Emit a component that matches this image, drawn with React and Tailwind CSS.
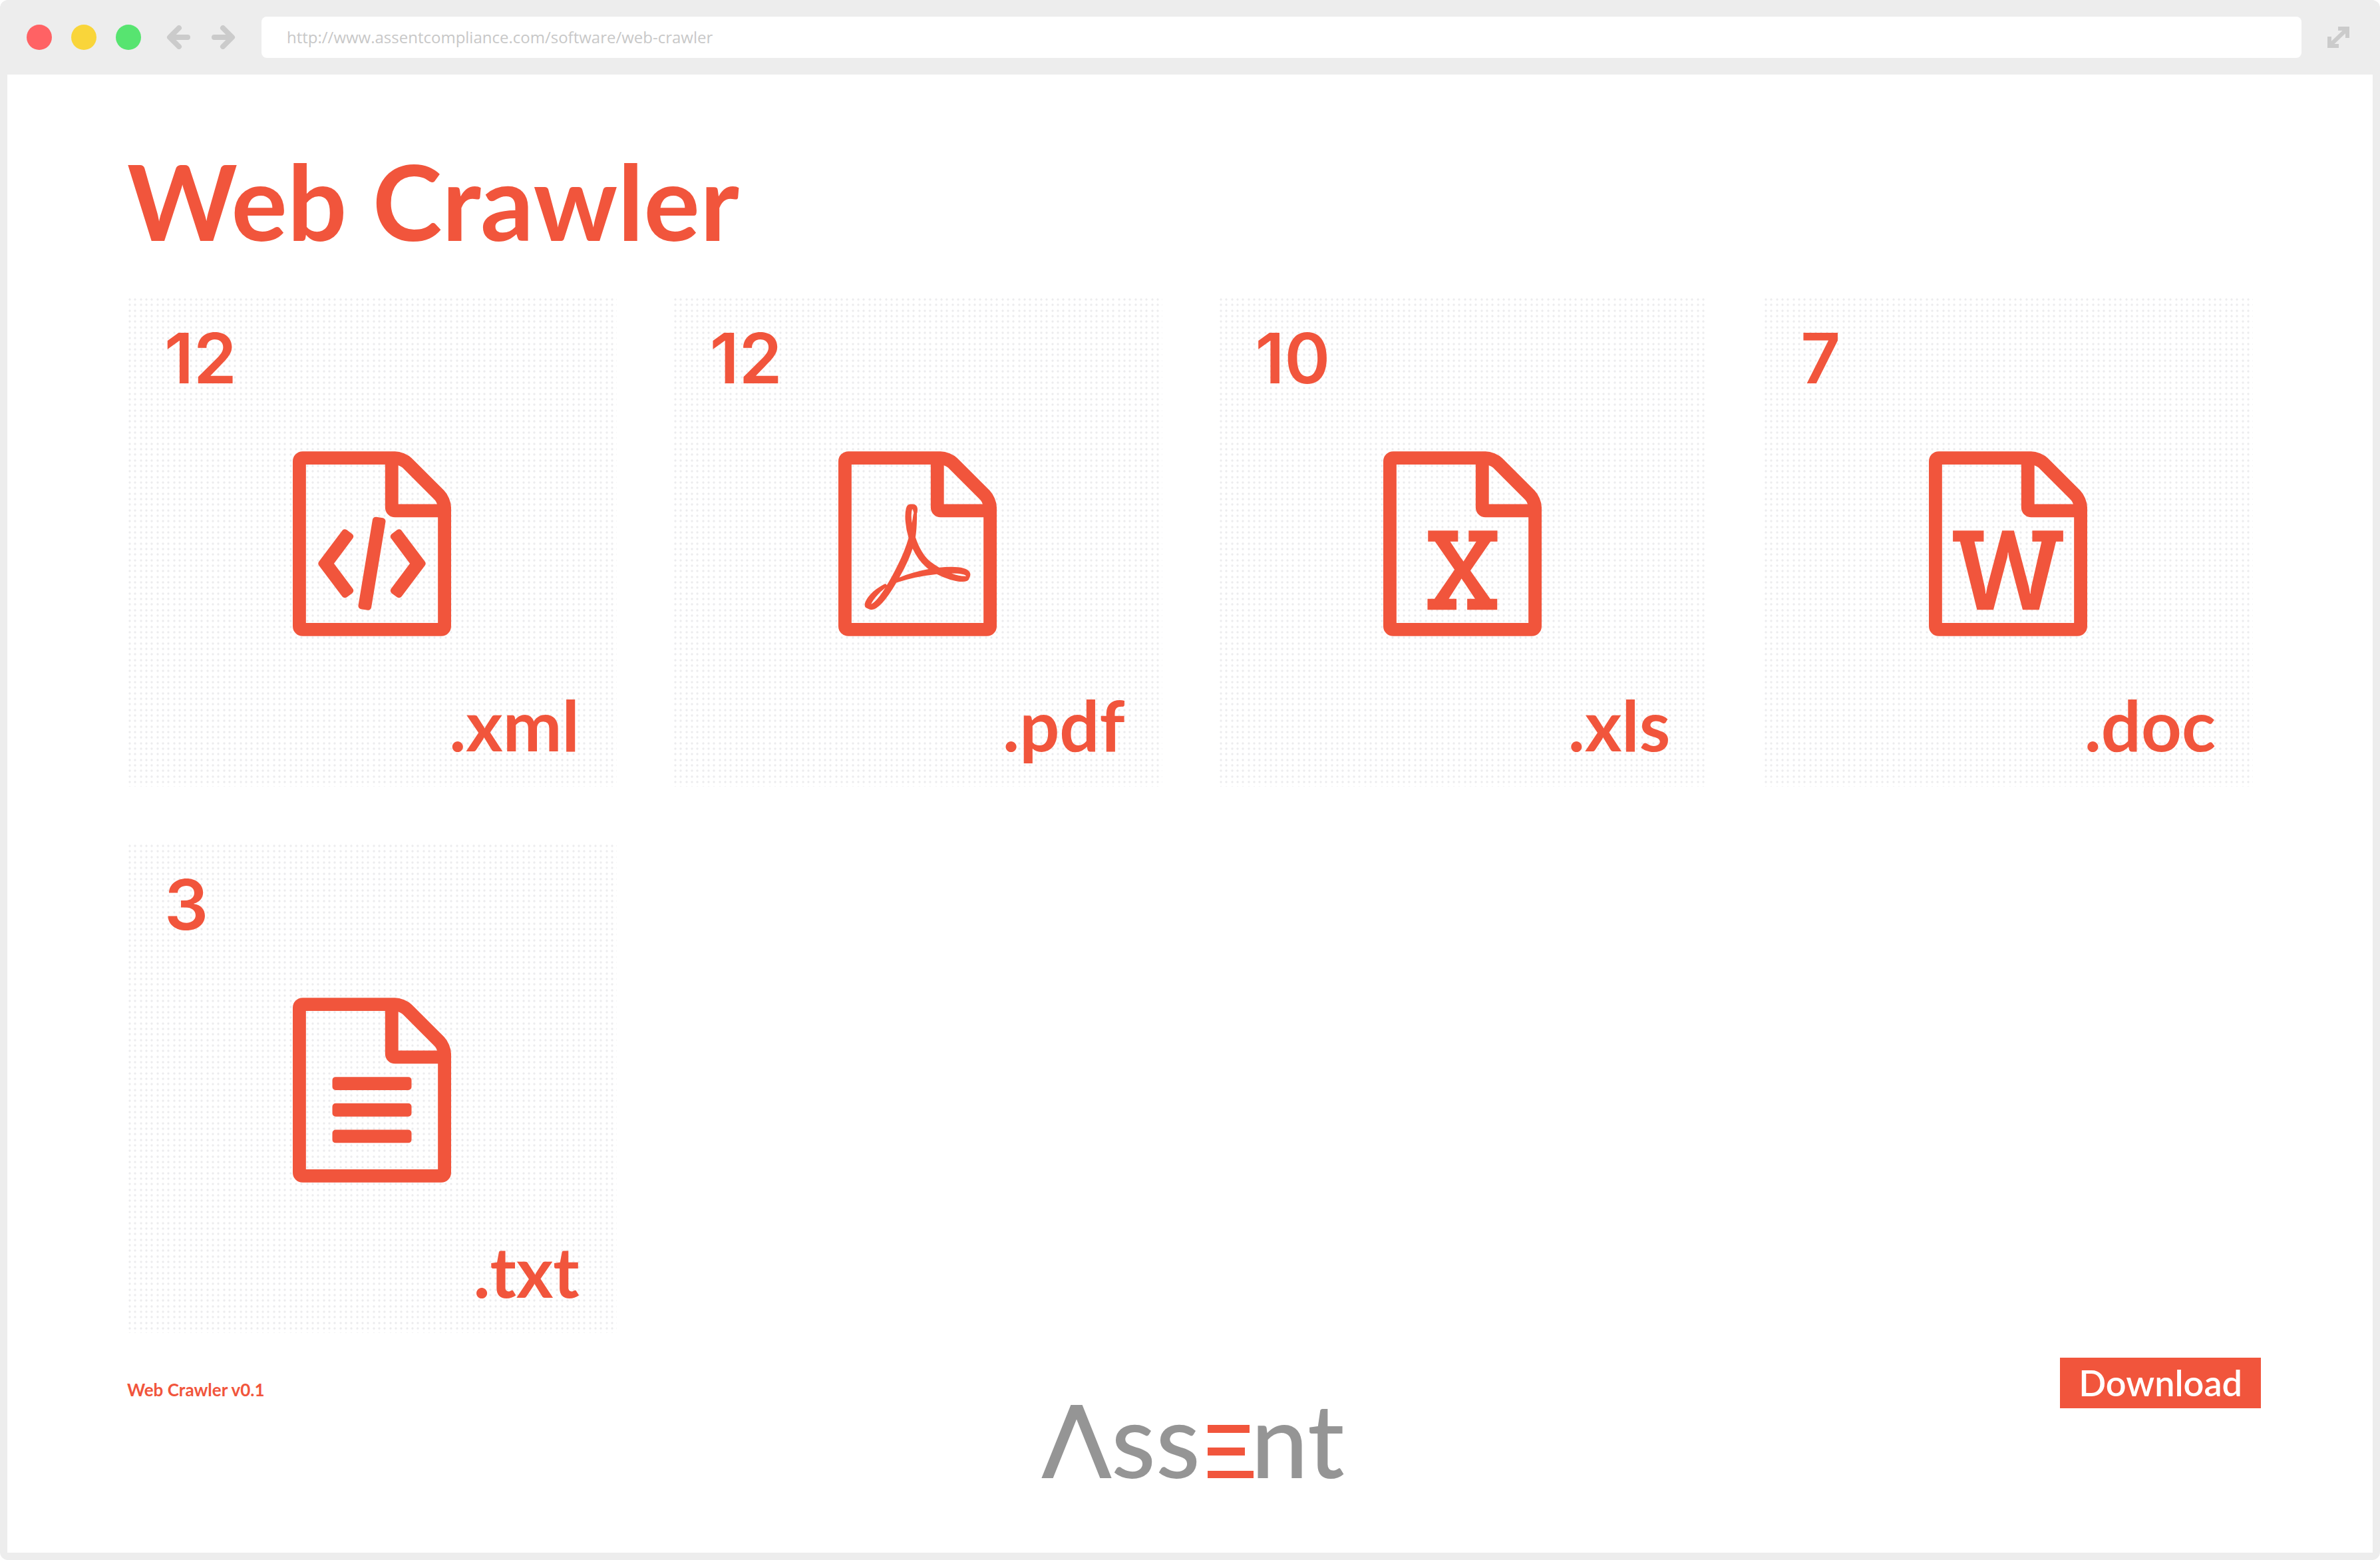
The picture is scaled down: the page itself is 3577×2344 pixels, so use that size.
import React from "react";

const DOC =
  "M1468 380q28 28 48 76t20 88v1152q0 40-28 68t-68 28H96q-40 0-68-28t-28-68V96q0-40 28-68T96 0h896q40 0 88 20t76 48zm-444-244v376h376q-10-29-22-41l-313-313q-12-12-41-22zm384 1528V640H992q-40 0-68-28t-28-68V128H128v1536h1280z";

const MARKS = {
  code: "M480 768q8-11 21-12.5t24 6.5l51 38q11 8 12.5 21t-6.5 24l-182 243 182 243q8 11 6.5 24t-12.5 21l-51 38q-11 8-24 6.5T480 1408L254 1107q-14-19 0-38zm802 301q14 19 0 38l-226 301q-8 11-21 12.5t-24-6.5l-51-38q-11-8-12.5-21t6.5-24l182-243-182-243q-8-11-6.5-24t12.5-21l51-38q11-8 24-6.5t21 12.5zm-620 461q-13-2-20.5-13t-5.5-24l138-831q2-13 13-20.5t24-5.5l63 10q13 2 20.5 13t5.5 24l-138 831q-2 13-13 20.5t-24 5.5z",
  pdf: "M894 1071q33 26 84 56 59-7 117-7 147 0 177 49 16 22 2 52 0 1-1 2l-2 2v1q-6 38-71 38-48 0-115-20t-130-53q-221 24-392 83-153 262-242 262-15 0-28-7l-24-12q-1-1-6-5-10-10-6-36 9-40 56-91.5t132-96.5q14-9 23 6 2 2 2 4 52-85 107-197 68-136 104-262-24-82-30.5-159.5T657 552q11-40 42-40h22q23 0 35 15 18 21 9 68-2 6-4 8 1 3 1 8v30q-2 123-14 192 55 164 146 238zm-576 411q52-24 137-158-51 40-87.5 84t-49.5 74zm398-920q-15 42-2 132 1-7 7-44 0-3 7-43 1-4 4-8-1-1-1-2-1-2-1-3-1-22-13-36 0 1-1 2v2zm-124 661q135-54 284-81-2-1-13-9.5t-16-13.5q-76-67-127-176-27 86-83 197-30 56-45 83zm646-16q-24-24-140-24 76 28 124 28 14 0 18-1 0-1-2-3z",
  sheet:
    "M429 1430v106h281v-106h-75l103-161q5-7 10-16.5t7.5-13.5 3.5-4h2q1 4 5 10 2 4 4.5 7.5t6 8 6.5 8.5l107 161h-76v106h291v-106h-68l-192-273 195-282h67V768H828v107h74L799 1034q-4 7-10 16.5t-9 13.5l-2 3h-2q-1-4-5-10-6-11-17-23L649 875h76V768H434v107h68l189 272-194 283h-68z",
  word: "M233 768v107h70l164 661h159l128-485q7-20 10-46 2-16 2-24h4l3 24q1 3 3.5 20t5.5 26l128 485h159l164-661h70V768h-300v107h90l-99 438q-5 20-7 46l-2 21h-4l-3-21q-1-5-4-21t-5-25L825 768H711l-144 545q-1 5-5 24.5t-4 21.5l-4 21h-4l-2-21q-2-26-7-46l-99-438h90V768H233z",
  text: "M384 800q0-14 9-23t23-9h704q14 0 23 9t9 23v64q0 14-9 23t-23 9H416q-14 0-23-9t-9-23v-64zm736 224q14 0 23 9t9 23v64q0 14-9 23t-23 9H416q-14 0-23-9t-9-23v-64q0-14 9-23t23-9h704zm0 256q14 0 23 9t9 23v64q0 14-9 23t-23 9H416q-14 0-23-9t-9-23v-64q0-14 9-23t23-9h704z",
};

const FILES = [
  { count: 12, ext: ".xml", mark: "code" },
  { count: 12, ext: ".pdf", mark: "pdf" },
  { count: 10, ext: ".xls", mark: "sheet" },
  { count: 7, ext: ".doc", mark: "word" },
  { count: 3, ext: ".txt", mark: "text" },
];

function FileIcon({ mark }) {
  return (
    <svg viewBox="0 0 1536 1792" className="h-[278px] w-[238px]" fill="currentColor" aria-hidden="true">
      <path d={DOC} />
      <path d={MARKS[mark]} />
    </svg>
  );
}

function DotGrid({ id }) {
  return (
    <svg className="absolute inset-0 h-full w-full" aria-hidden="true">
      <defs>
        <pattern id={id} width="25" height="25" patternUnits="userSpaceOnUse">
          <g fill="#ececee">
            {[4, 12, 21].map((y) => [4, 12, 21].map((x) => <circle key={`${x}-${y}`} cx={x} cy={y} r="1.7" />))}
          </g>
        </pattern>
      </defs>
      <rect width="100%" height="100%" fill={`url(#${id})`} />
    </svg>
  );
}

function FileCard({ count, ext, mark }) {
  return (
    <li className="relative flex h-[736px] flex-col items-center px-[56px] pt-[30px]">
      <DotGrid id={`dots-${mark}`} />
      <span className="relative self-start font-[Inter,sans-serif] text-[104px] leading-[124px] font-semibold">{count}</span>
      <div className="relative mt-[78px]">
        <FileIcon mark={mark} />
      </div>
      <span className="relative mt-[70px] self-end text-[106px] leading-[124px] font-bold">{ext}</span>
    </li>
  );
}

function AssentLogo() {
  return (
    <svg viewBox="0 -44 460 190" className="h-[190px] w-[460px]" role="img" aria-label="Assent">
      <clipPath id="logo-band">
        <rect x="-10" y="0" width="130" height="110" />
      </clipPath>
      <polyline points="1,130 53,0 105,130" fill="none" stroke="#959595" strokeWidth="16" clipPath="url(#logo-band)" />
      <g fill="#959595" fontFamily="Lato, sans-serif" fontSize="154" fontWeight="500">
        <text x="105" y="110">ss</text>
        <text x="315" y="110">nt</text>
      </g>
      <path fill="#f1553c" d="M250 30h63v12h-63zM250 64h56v12h-56zM250 99h69v11h-69z" />
    </svg>
  );
}

export default function App() {
  return (
    <div className="flex min-h-screen flex-col rounded-xl bg-[#ededed] px-[11px] pb-[11px] font-[Lato,sans-serif] text-[#f1553c]">
      <header className="flex h-[112px] items-center pr-[34px] pl-[29px]">
        <div className="flex gap-[29px]">
          <span className="size-[38px] rounded-full bg-[#ff6264]" />
          <span className="size-[38px] rounded-full bg-[#f9d53a]" />
          <span className="size-[38px] rounded-full bg-[#57e470]" />
        </div>
        <nav className="ml-[38px] flex gap-[32px] text-[#cbcbcb]">
          <button type="button" aria-label="Back">
            <svg viewBox="0 0 36 36" className="size-9" fill="none" stroke="currentColor" strokeWidth="8" strokeLinecap="round">
              <path d="M19 4L5 18l14 14M6 18h26" strokeLinejoin="round" />
            </svg>
          </button>
          <button type="button" aria-label="Forward">
            <svg viewBox="0 0 36 36" className="size-9" fill="none" stroke="currentColor" strokeWidth="8" strokeLinecap="round">
              <path d="M17 4l14 14-14 14M30 18H4" strokeLinejoin="round" />
            </svg>
          </button>
        </nav>
        <input
          type="text"
          aria-label="Address"
          defaultValue="http://www.assentcompliance.com/software/web-crawler"
          className="ml-[39px] h-[62px] min-w-0 flex-1 rounded-lg bg-white px-[38px] pb-[2px] font-['Open_Sans',sans-serif] text-[24px] text-[#c8c8c8]"
        />
        <button type="button" aria-label="Full screen" className="ml-[39px] text-[#cbcbcb]">
          <svg viewBox="0 0 34 32" className="h-8 w-[34px]" fill="none" stroke="currentColor" strokeWidth="6">
            <path d="M16 3h14v14M3 15v14h14M5 27L28 5" />
          </svg>
        </button>
      </header>

      <main className="flex flex-1 flex-col bg-white pt-[97px] pr-[168px] pb-[76px] pl-[180px]">
        <h1 className="text-[158px] leading-[184px] font-bold">Web Crawler</h1>
        <ul className="mt-[53px] grid grid-cols-4 gap-x-[84px] gap-y-[85px] pr-[12px]">
          {FILES.map((file) => (
            <FileCard key={file.ext} {...file} />
          ))}
        </ul>
        <footer className="mt-[37px] grid grid-cols-3 items-start">
          <p className="mt-[30px] text-[26px] leading-[36px] font-bold">Web Crawler v0.1</p>
          <div className="mt-[27px] justify-self-center">
            <AssentLogo />
          </div>
          <button type="button" className="h-[76px] justify-self-end bg-[#f1553c] px-[28px] text-[54px] leading-[76px] font-semibold text-white">
            Download
          </button>
        </footer>
      </main>
    </div>
  );
}
